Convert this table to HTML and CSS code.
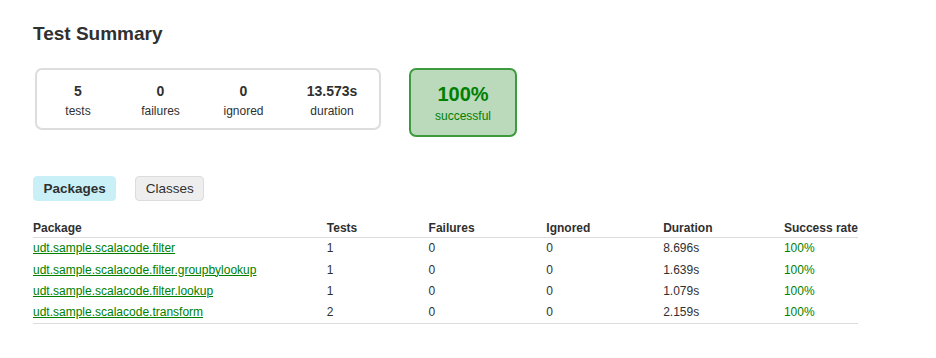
FILE: index.html
```html
<!DOCTYPE html>
<html lang="en">
<head>
<meta charset="utf-8">
<title>Test results - Test Summary</title>
<link rel="stylesheet" href="styles.css">
</head>
<body>
<div class="content">
  <h1 class="title">Test Summary</h1>
  <div class="summary">
    <div class="summary-group">
      <div class="info-box">
        <div class="counter">5</div>
        <p class="label">tests</p>
      </div>
      <div class="info-box">
        <div class="counter">0</div>
        <p class="label">failures</p>
      </div>
      <div class="info-box">
        <div class="counter">0</div>
        <p class="label">ignored</p>
      </div>
      <div class="info-box info-box-duration">
        <div class="counter">13.573s</div>
        <p class="label">duration</p>
      </div>
    </div>
    <div class="success-rate">
      <div class="percent">100%</div>
      <p class="label">successful</p>
    </div>
  </div>
  <div class="tabs">
    <span class="tab tab-active">Packages</span>
    <span class="tab">Classes</span>
  </div>
  <table class="results">
    <thead>
      <tr>
        <th class="col-package">Package</th>
        <th class="col-tests">Tests</th>
        <th class="col-failures">Failures</th>
        <th class="col-ignored">Ignored</th>
        <th class="col-duration">Duration</th>
        <th class="col-rate">Success rate</th>
      </tr>
    </thead>
    <tbody>
      <tr>
        <td><a class="pkg-link" href="#">udt.sample.scalacode.filter</a></td>
        <td>1</td><td>0</td><td>0</td><td>8.696s</td><td class="ok">100%</td>
      </tr>
      <tr>
        <td><a class="pkg-link" href="#">udt.sample.scalacode.filter.groupbylookup</a></td>
        <td>1</td><td>0</td><td>0</td><td>1.639s</td><td class="ok">100%</td>
      </tr>
      <tr>
        <td><a class="pkg-link" href="#">udt.sample.scalacode.filter.lookup</a></td>
        <td>1</td><td>0</td><td>0</td><td>1.079s</td><td class="ok">100%</td>
      </tr>
      <tr>
        <td><a class="pkg-link" href="#">udt.sample.scalacode.transform</a></td>
        <td>2</td><td>0</td><td>0</td><td>2.159s</td><td class="ok">100%</td>
      </tr>
    </tbody>
  </table>
</div>
</body>
</html>
```

FILE: styles.css
```css
html, body {
  margin: 0;
  padding: 0;
  background: #ffffff;
}

body {
  font-family: "Liberation Sans", Helvetica, Arial, sans-serif;
  color: #303030;
}

.content {
  padding: 22px 0 0 33px;
}

.title {
  margin: 0;
  font-size: 19px;
  line-height: 24px;
  font-weight: bold;
  color: #303030;
}

.summary {
  display: flex;
  align-items: flex-start;
  gap: 28px;
  margin-top: 22px;
  padding-left: 2px;
}

.summary-group {
  display: flex;
  width: 342px;
  height: 58px;
  border: 2px solid #dddddd;
  border-radius: 7px;
}

.info-box {
  width: 83px;
  padding-top: 13px;
  text-align: center;
}

.info-box:first-child {
  width: 82px;
}

.info-box-duration {
  width: 94px;
}

.counter {
  font-size: 14px;
  line-height: 16px;
  font-weight: bold;
  margin-bottom: 5px;
}

.label {
  margin: 0;
  font-size: 12px;
  line-height: 14px;
}

.success-rate {
  width: 104px;
  height: 65px;
  box-sizing: content-box;
  border: 2px solid #3d9b3d;
  border-radius: 7px;
  background: #bbd9bb;
  color: #008000;
  text-align: center;
}

.percent {
  margin-top: 12px;
  margin-bottom: 2.5px;
  font-size: 20px;
  line-height: 24px;
  font-weight: bold;
}

.tabs {
  display: flex;
  gap: 19px;
  margin-top: 39px;
}

.tab {
  display: inline-block;
  height: 25px;
  box-sizing: border-box;
  padding: 0 9.5px;
  line-height: 23px;
  font-size: 13.5px;
  border: 1px solid #dcdcdc;
  border-radius: 4px;
  background: #eeeeee;
  color: #303030;
}

.tab-active {
  font-weight: bold;
  background: #c9f0f6;
  border-color: #c9f0f6;
}

.results {
  margin-top: 17px;
  width: 825px;
  border-collapse: collapse;
  font-size: 12px;
}

.results th,
.results td {
  text-align: left;
  white-space: nowrap;
  padding: 3px 0;
  line-height: 15.3px;
}

.results th {
  padding-bottom: 1px;
  font-weight: bold;
  border-bottom: 1px solid #dcdcdc;
}

.results tbody tr:last-child td {
  border-bottom: 1px solid #dcdcdc;
}

.col-package { width: 294px; }
.col-tests { width: 102px; }
.col-failures { width: 118px; }
.col-ignored { width: 117px; }
.col-duration { width: 121px; }
.col-rate { width: 73px; }

.pkg-link {
  color: #008000;
  text-decoration: underline;
}

.ok {
  color: #008000;
}
```
